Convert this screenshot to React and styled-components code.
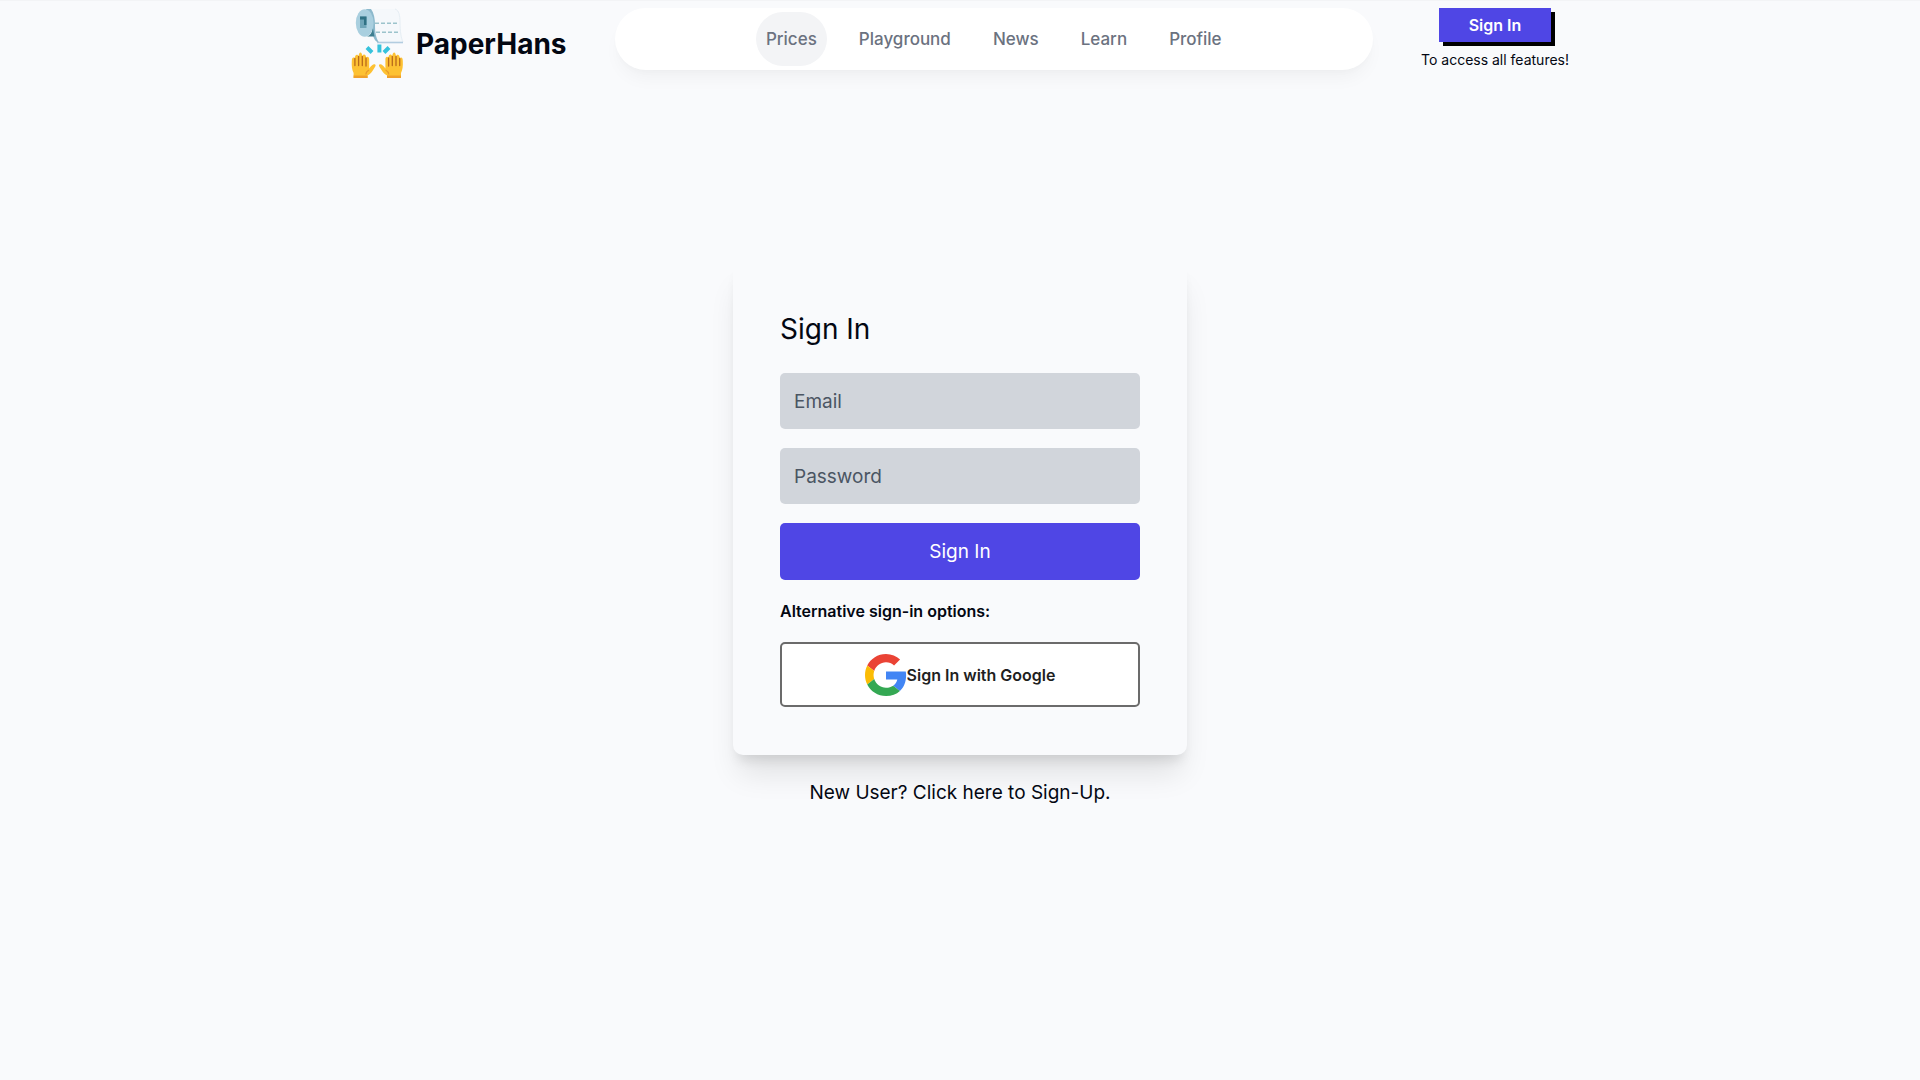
import React from "react";
import styled, { createGlobalStyle } from "styled-components";

const GlobalStyle = createGlobalStyle`
  *, *::before, *::after { box-sizing: border-box; }
  body {
    margin: 0;
    background: #f9fafc;
    color: #030712;
    font-family: Inter, "Liberation Sans", sans-serif;
  }
  button, input { font: inherit; }
  a { color: inherit; text-decoration: none; }
`;

const Page = styled.div`
  min-height: 100vh;
  border-top: 1px solid #f3f4f6;
`;

const Header = styled.header`
  display: grid;
  grid-template-columns: auto 1fr auto;
  align-items: start;
  gap: 48px;
  max-width: 1218px;
  margin: 0 auto;
  padding-top: 7px;
`;

const Brand = styled.a`
  display: flex;
  align-items: center;
  gap: 12px;
  font-size: 28px;
  line-height: 36px;
  font-weight: 700;
`;

const Nav = styled.nav`
  display: flex;
  align-items: center;
  justify-content: center;
  gap: 22px;
  padding: 4px;
  border-radius: 32px;
  background: #fff;
  box-shadow: 0 12px 18px -4px rgba(0, 0, 0, 0.04), 0 4px 7px -2px rgba(0, 0, 0, 0.02);
`;

const NavLink = styled.a`
  padding: 15px 10px;
  border-radius: 28px;
  background: ${(p) => (p.$active ? "#f3f4f6" : "transparent")};
  color: #6b7280;
  font-size: 17px;
  line-height: 24px;
  font-weight: 500;
`;

const Account = styled.div`
  display: flex;
  flex-direction: column;
  align-items: center;
  gap: 8px;
  font-size: 14px;
  line-height: 20px;
`;

const AccountButton = styled.button`
  padding: 5px 30px;
  border: 0;
  background: #4f46e5;
  color: #fff;
  box-shadow: 4px 4px 0 #000;
  font-size: 16px;
  line-height: 24px;
  font-weight: 600;
`;

const Main = styled.main`
  display: flex;
  flex-direction: column;
  align-items: center;
  gap: 24px;
  padding: 182px 24px 48px;
`;

const Card = styled.form`
  display: flex;
  flex-direction: column;
  gap: 19px;
  width: 100%;
  max-width: 454px;
  padding: 48px 47px;
  border-radius: 10px;
  background: #f9fafc;
  box-shadow: 0 24px 30px -6px rgba(0, 0, 0, 0.1), 0 10px 12px -5px rgba(0, 0, 0, 0.1);
`;

const Title = styled.h1`
  margin: 0 0 5px;
  font-size: 28px;
  line-height: 40px;
  font-weight: 400;
`;

const Field = styled.input`
  width: 100%;
  height: 56px;
  padding: 0 14px;
  border: 0;
  border-radius: 5px;
  background: #d1d5db;
  color: #030712;
  font-size: 19px;
  &::placeholder { color: #4b5563; opacity: 1; }
`;

const Submit = styled.button`
  height: 57px;
  border: 0;
  border-radius: 5px;
  background: #4f46e5;
  color: #fff;
  font-size: 19px;
`;

const Note = styled.p`
  margin: 0;
  font-size: 16px;
  line-height: 24px;
  font-weight: 600;
`;

const GoogleButton = styled.button`
  display: flex;
  align-items: center;
  justify-content: center;
  height: 65px;
  border: 2px solid #6b6b6b;
  border-radius: 5px;
  background: #fff;
  color: #1f1f1f;
  font-size: 16px;
  font-weight: 600;
`;

const SignUp = styled.a`
  font-size: 19px;
  line-height: 28px;
`;

function Hand() {
  return (
    <g>
      <path
        d="M2.600 70V65C1 62 .5 58 .8 53c0-4 2.400-4.200 2.800-2 .2-5 3.200-5.500 4-2.500.3-5.500 3.300-5.500 3.800 0 .8-3 3.600-2.500 3.800 1.500.8-2 3-1.500 3 1.500v9c2-3 4.500-5 6-4 1.200 1-.5 3-1.500 4.500-1.700 3-3 5-6.200 6.500V70z"
        fill="#fdc132"
      />
      <path d="M2.600 67.500h14V70h-14z" fill="#f0a029" />
      <path d="M3.900 50.500v7M7.600 48.500v9M11.300 48.500v9M15 50v8" stroke="#b8691c" strokeWidth="1.300" strokeLinecap="round" fill="none" />
      <path d="M18 62c-2 1-3 2.500-3.200 4.500" stroke="#e89a2b" strokeWidth="1.200" fill="none" />
    </g>
  );
}

function PaperLogo() {
  return (
    <svg width="53" height="71" viewBox="0 0 53 71" aria-hidden="true">
      <path d="M15 1h29c4 1 5 7 5 13 0 9 1 16 3 20H27c-3-3-3-7-4-12z" fill="#f5f8fb" />
      <path d="M44 1c4 1 5 7 5 13 0 9 1 16 3 20" fill="none" stroke="#e6eef4" />
      <path d="M26 34.500h26" stroke="#b3cde0" strokeWidth="1.600" />
      <path d="M24 15.300h23M25 24.300h24" stroke="#9cc3cc" strokeWidth="1.600" strokeDasharray="4 2" />
      <path d="M15 1h5c3 4 4 10 4 16 0 8 1 13 4 17.500-4-1-5-4-6-7z" fill="#8cb9cc" />
      <ellipse cx="13.700" cy="15" rx="8.900" ry="13.700" fill="#a9cfdf" />
      <path d="M16 28.500c3-1 5-4 6-8l1.500 8z" fill="#3d7e90" />
      <path d="M9 8.500h6.500V20H9z" fill="#6fa5b8" />
      <path d="M9 8.500h6.500V17H13v-5.500H9z" fill="#2f7184" />
      <path d="M28.400 36.500v8M16 39.500l5 5M38 39.500l-5 5" stroke="#36c2dc" strokeWidth="4" />
      <Hand />
      <g transform="translate(52.600 0) scale(-1 1)">
        <Hand />
      </g>
    </svg>
  );
}

function GoogleLogo() {
  return (
    <svg width="42" height="42" viewBox="0 0 48 48" aria-hidden="true">
      <path fill="#EA4335" d="M24 9.500c3.540 0 6.710 1.220 9.210 3.600l6.850-6.850C35.900 2.380 30.470 0 24 0 14.620 0 6.510 5.380 2.560 13.220l7.980 6.190C12.430 13.720 17.740 9.500 24 9.500z" />
      <path fill="#4285F4" d="M46.980 24.550c0-1.570-.15-3.090-.38-4.550H24v9.020h12.940c-.58 2.960-2.260 5.480-4.780 7.180l7.730 6c4.510-4.180 7.090-10.360 7.090-17.650z" />
      <path fill="#FBBC05" d="M10.530 28.590c-.48-1.450-.76-2.990-.76-4.590s.27-3.140.76-4.590l-7.980-6.190C.92 16.460 0 20.120 0 24c0 3.880.92 7.540 2.560 10.780l7.970-6.190z" />
      <path fill="#34A853" d="M24 48c6.480 0 11.930-2.130 15.890-5.810l-7.730-6c-2.150 1.450-4.920 2.300-8.160 2.300-6.260 0-11.570-4.220-13.470-9.910l-7.980 6.190C6.510 42.620 14.620 48 24 48z" />
    </svg>
  );
}

const links = ["Prices", "Playground", "News", "Learn", "Profile"];

export default function App() {
  return (
    <Page>
      <GlobalStyle />
      <Header>
        <Brand href="#home">
          <PaperLogo />
          PaperHans
        </Brand>
        <Nav>
          {links.map((label, i) => (
            <NavLink key={label} href={`#${label.toLowerCase()}`} $active={i === 0}>
              {label}
            </NavLink>
          ))}
        </Nav>
        <Account>
          <AccountButton type="button">Sign In</AccountButton>
          <span>To access all features!</span>
        </Account>
      </Header>
      <Main>
        <Card onSubmit={(e) => e.preventDefault()}>
          <Title>Sign In</Title>
          <Field type="email" placeholder="Email" aria-label="Email" />
          <Field type="password" placeholder="Password" aria-label="Password" />
          <Submit type="submit">Sign In</Submit>
          <Note>Alternative sign-in options:</Note>
          <GoogleButton type="button">
            <GoogleLogo />
            Sign In with Google
          </GoogleButton>
        </Card>
        <SignUp href="#sign-up">New User? Click here to Sign-Up.</SignUp>
      </Main>
    </Page>
  );
}
